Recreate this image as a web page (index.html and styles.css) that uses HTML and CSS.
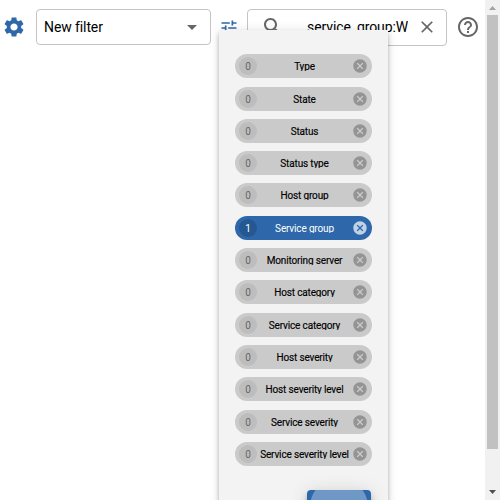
FILE: index.html
```html
<!DOCTYPE html>
<html lang="en">
<head>
<meta charset="utf-8">
<title>Resource filters</title>
<link rel="stylesheet" href="styles.css">
</head>
<body>
<div class="page">
  <main class="content">
    <header class="toolbar">
      <svg class="gear" viewBox="0 0 24 24"><path d="M19.14 12.94c.04-.3.06-.61.06-.94 0-.32-.02-.64-.07-.94l2.03-1.58c.18-.14.23-.41.12-.61l-1.92-3.32c-.12-.22-.37-.29-.59-.22l-2.39.96c-.5-.38-1.03-.7-1.62-.94l-.36-2.54c-.04-.24-.24-.41-.48-.41h-3.84c-.24 0-.43.17-.47.41l-.36 2.54c-.59.24-1.13.57-1.62.94l-2.39-.96c-.22-.08-.47 0-.59.22L2.74 8.87c-.12.21-.08.47.12.61l2.03 1.58c-.05.3-.09.63-.09.94s.02.64.07.94l-2.03 1.58c-.18.14-.23.41-.12.61l1.92 3.32c.12.22.37.29.59.22l2.39-.96c.5.38 1.03.7 1.62.94l.36 2.54c.05.24.24.41.48.41h3.84c.24 0 .44-.17.47-.41l.36-2.54c.59-.24 1.13-.56 1.62-.94l2.39.96c.22.08.47 0 .59-.22l1.92-3.32c.12-.22.07-.47-.12-.61l-2.01-1.58zM12 15.6c-1.98 0-3.6-1.62-3.6-3.6s1.62-3.6 3.6-3.6 3.6 1.62 3.6 3.6-1.62 3.6-3.6 3.6z"/></svg>
      <div class="select"><span>New filter</span><svg class="arrow" viewBox="0 0 24 24"><path d="M7 10l5 5 5-5z"/></svg></div>
      <svg class="tune" viewBox="0 0 24 24"><path d="M3 17v2h6v-2H3zM3 5v2h10V5H3zm10 16v-2h8v-2h-8v-2h-2v6h2zM7 9v2H3v2h4v2h2V9H7zm14 4v-2H11v2h10zm-6-4h2V7h4V5h-4V3h-2v6z"/></svg>
      <div class="search">
        <svg class="lens" viewBox="0 0 24 24"><path d="M15.5 14h-.79l-.28-.27C15.41 12.59 16 11.11 16 9.5 16 5.91 13.09 3 9.5 3S3 5.91 3 9.5 5.91 16 9.5 16c1.61 0 3.09-.59 4.23-1.57l.27.28v.79l5 4.99L20.49 19l-4.99-5zm-6 0C7.01 14 5 11.99 5 9.5S7.01 5 9.5 5 14 7.01 14 9.5 11.99 14 9.5 14z"/></svg>
        <span class="query">service_group:W</span>
        <svg class="clear" viewBox="0 0 24 24"><path d="M19 6.41L17.59 5 12 10.59 6.41 5 5 6.41 10.59 12 5 17.59 6.41 19 12 13.41 17.59 19 19 17.59 13.41 12z"/></svg>
      </div>
      <svg class="help" viewBox="0 0 24 24"><path d="M11 18h2v-2h-2v2zm1-16C6.48 2 2 6.48 2 12s4.480 10 10 10 10-4.480 10-10S17.520 2 12 2zm0 18c-4.410 0-8-3.590-8-8s3.590-8 8-8 8 3.590 8 8-3.590 8-8 8zm0-14c-2.210 0-4 1.790-4 4h2c0-1.100.9-2 2-2s2 .9 2 2c0 2-3 1.750-3 5h2c0-2.250 3-2.500 3-5 0-2.210-1.790-4-4-4z"/></svg>
    </header>
    <section class="panel">
      <svg class="defs"><symbol id="x" viewBox="0 0 24 24"><path d="M12 2C6.470 2 2 6.470 2 12s4.470 10 10 10 10-4.470 10-10S17.530 2 12 2zm5 13.590L15.590 17 12 13.410 8.410 17 7 15.590 10.590 12 7 8.410 8.410 7 12 10.590 15.590 7 17 8.410 13.410 12 17 15.590z"/></symbol></svg>
      <div class="chip"><span class="count">0</span><span class="label">Type</span><svg class="del"><use href="#x"/></svg></div>
      <div class="chip"><span class="count">0</span><span class="label">State</span><svg class="del"><use href="#x"/></svg></div>
      <div class="chip"><span class="count">0</span><span class="label">Status</span><svg class="del"><use href="#x"/></svg></div>
      <div class="chip"><span class="count">0</span><span class="label">Status type</span><svg class="del"><use href="#x"/></svg></div>
      <div class="chip"><span class="count">0</span><span class="label">Host group</span><svg class="del"><use href="#x"/></svg></div>
      <div class="chip active"><span class="count">1</span><span class="label">Service group</span><svg class="del"><use href="#x"/></svg></div>
      <div class="chip"><span class="count">0</span><span class="label">Monitoring server</span><svg class="del"><use href="#x"/></svg></div>
      <div class="chip"><span class="count">0</span><span class="label">Host category</span><svg class="del"><use href="#x"/></svg></div>
      <div class="chip"><span class="count">0</span><span class="label">Service category</span><svg class="del"><use href="#x"/></svg></div>
      <div class="chip"><span class="count">0</span><span class="label">Host severity</span><svg class="del"><use href="#x"/></svg></div>
      <div class="chip"><span class="count">0</span><span class="label">Host severity level</span><svg class="del"><use href="#x"/></svg></div>
      <div class="chip"><span class="count">0</span><span class="label">Service severity</span><svg class="del"><use href="#x"/></svg></div>
      <div class="chip"><span class="count">0</span><span class="label">Service severity level</span><svg class="del"><use href="#x"/></svg></div>
      <div class="submit"><span class="ripple"></span></div>
    </section>
  </main>
  <aside class="scrollbar">
    <svg class="step" viewBox="0 0 15 15"><path class="up" d="M4 10h7L7.500 6z"/></svg>
    <div class="thumb"></div>
    <svg class="step last" viewBox="0 0 15 15"><path class="down" d="M4 5h7L7.500 9z"/></svg>
  </aside>
</div>
</body>
</html>
```
FILE: styles.css
```css
* { box-sizing: border-box; }
body { margin: 0; background: #fff; font-family: Roboto, sans-serif; color: #000; overflow: hidden; }
svg { display: block; flex: none; }
.page { display: flex; height: 500px; overflow: hidden; }
.content { position: relative; width: 485px; flex: none; }
.toolbar { display: flex; align-items: center; padding: 8px 0 0 2px; height: 46px; }
.gear { width: 24px; height: 24px; fill: #2e68aa; }
.select { display: flex; align-items: center; justify-content: space-between; width: 175px; height: 36px; margin-left: 10px; padding: 0 6px 0 7px; border: 1px solid #c4c4c4; border-radius: 4px; font-size: 14px; letter-spacing: -0.1px; flex: none; }
.arrow { width: 24px; height: 24px; fill: #666; }
.tune { width: 20px; height: 20px; margin: 2px 0 0 8px; fill: #2e68aa; }
.search { display: flex; align-items: center; width: 200px; height: 37px; margin-left: 8px; padding-left: 13px; border: 1px solid #c4c4c4; border-radius: 4px; flex: none; }
.lens { width: 24px; height: 24px; fill: #666; }
.query { width: 101px; margin-left: 22px; font-size: 14px; letter-spacing: -0.1px; line-height: 20px; white-space: nowrap; overflow: hidden; flex: none; }
.clear { width: 20px; height: 20px; margin-left: 9px; fill: #666; }
.help { width: 24px; height: 24px; margin-left: 9px; fill: #666; }
.panel { position: absolute; left: 219px; top: 30px; width: 169px; height: 490px; padding: 24.25px 16px 0; background: #f3f3f3; box-shadow: 0 2px 4px -1px rgba(0,0,0,.2), 0 4px 5px rgba(0,0,0,.14), 0 1px 10px rgba(0,0,0,.12); }
.defs { width: 0; height: 0; }
.chip { display: flex; align-items: center; height: 24px; width: 137px; margin-bottom: 8.3px; border-radius: 12px; background: #cacaca; font-size: 10px; }
.count { width: 18px; height: 18px; margin-left: 4px; border-radius: 50%; background: #bdbdbd; color: #666; line-height: 20px; text-align: center; flex: none; }
.label { flex: 1; height: 10px; line-height: 11px; overflow: hidden; text-align: center; white-space: nowrap; letter-spacing: -0.15px; -webkit-text-stroke: 0.15px currentColor; }
.del { width: 16px; height: 16px; margin: 0 4px 0 0; fill: #949494; }
.active { background: #2e68aa; color: #fff; }
.active .label { -webkit-text-stroke: 0; }
.active .count { background: #255891; color: #fff; }
.active .del { fill: #c0d2e6; }
.submit { width: 64px; height: 36px; margin: 23.85px 0 0 72px; border-radius: 4px; background: #2e68aa; overflow: hidden; box-shadow: 0 3px 5px -1px rgba(0,0,0,.2), 0 6px 10px rgba(0,0,0,.14), 0 1px 18px rgba(0,0,0,.12); }
.ripple { display: block; width: 58px; height: 58px; margin: -12px 0 0 3px; border-radius: 50%; background: #6f98c6; }
.scrollbar { display: flex; flex-direction: column; width: 15px; background: #f1f1f1; }
.step { width: 15px; height: 15px; }
.thumb { width: 11px; height: 434px; margin-left: 2px; background: #c1c1c1; }
.last { margin-top: auto; }
.up { fill: #a3a3a3; }
.down { fill: #505050; }
```
